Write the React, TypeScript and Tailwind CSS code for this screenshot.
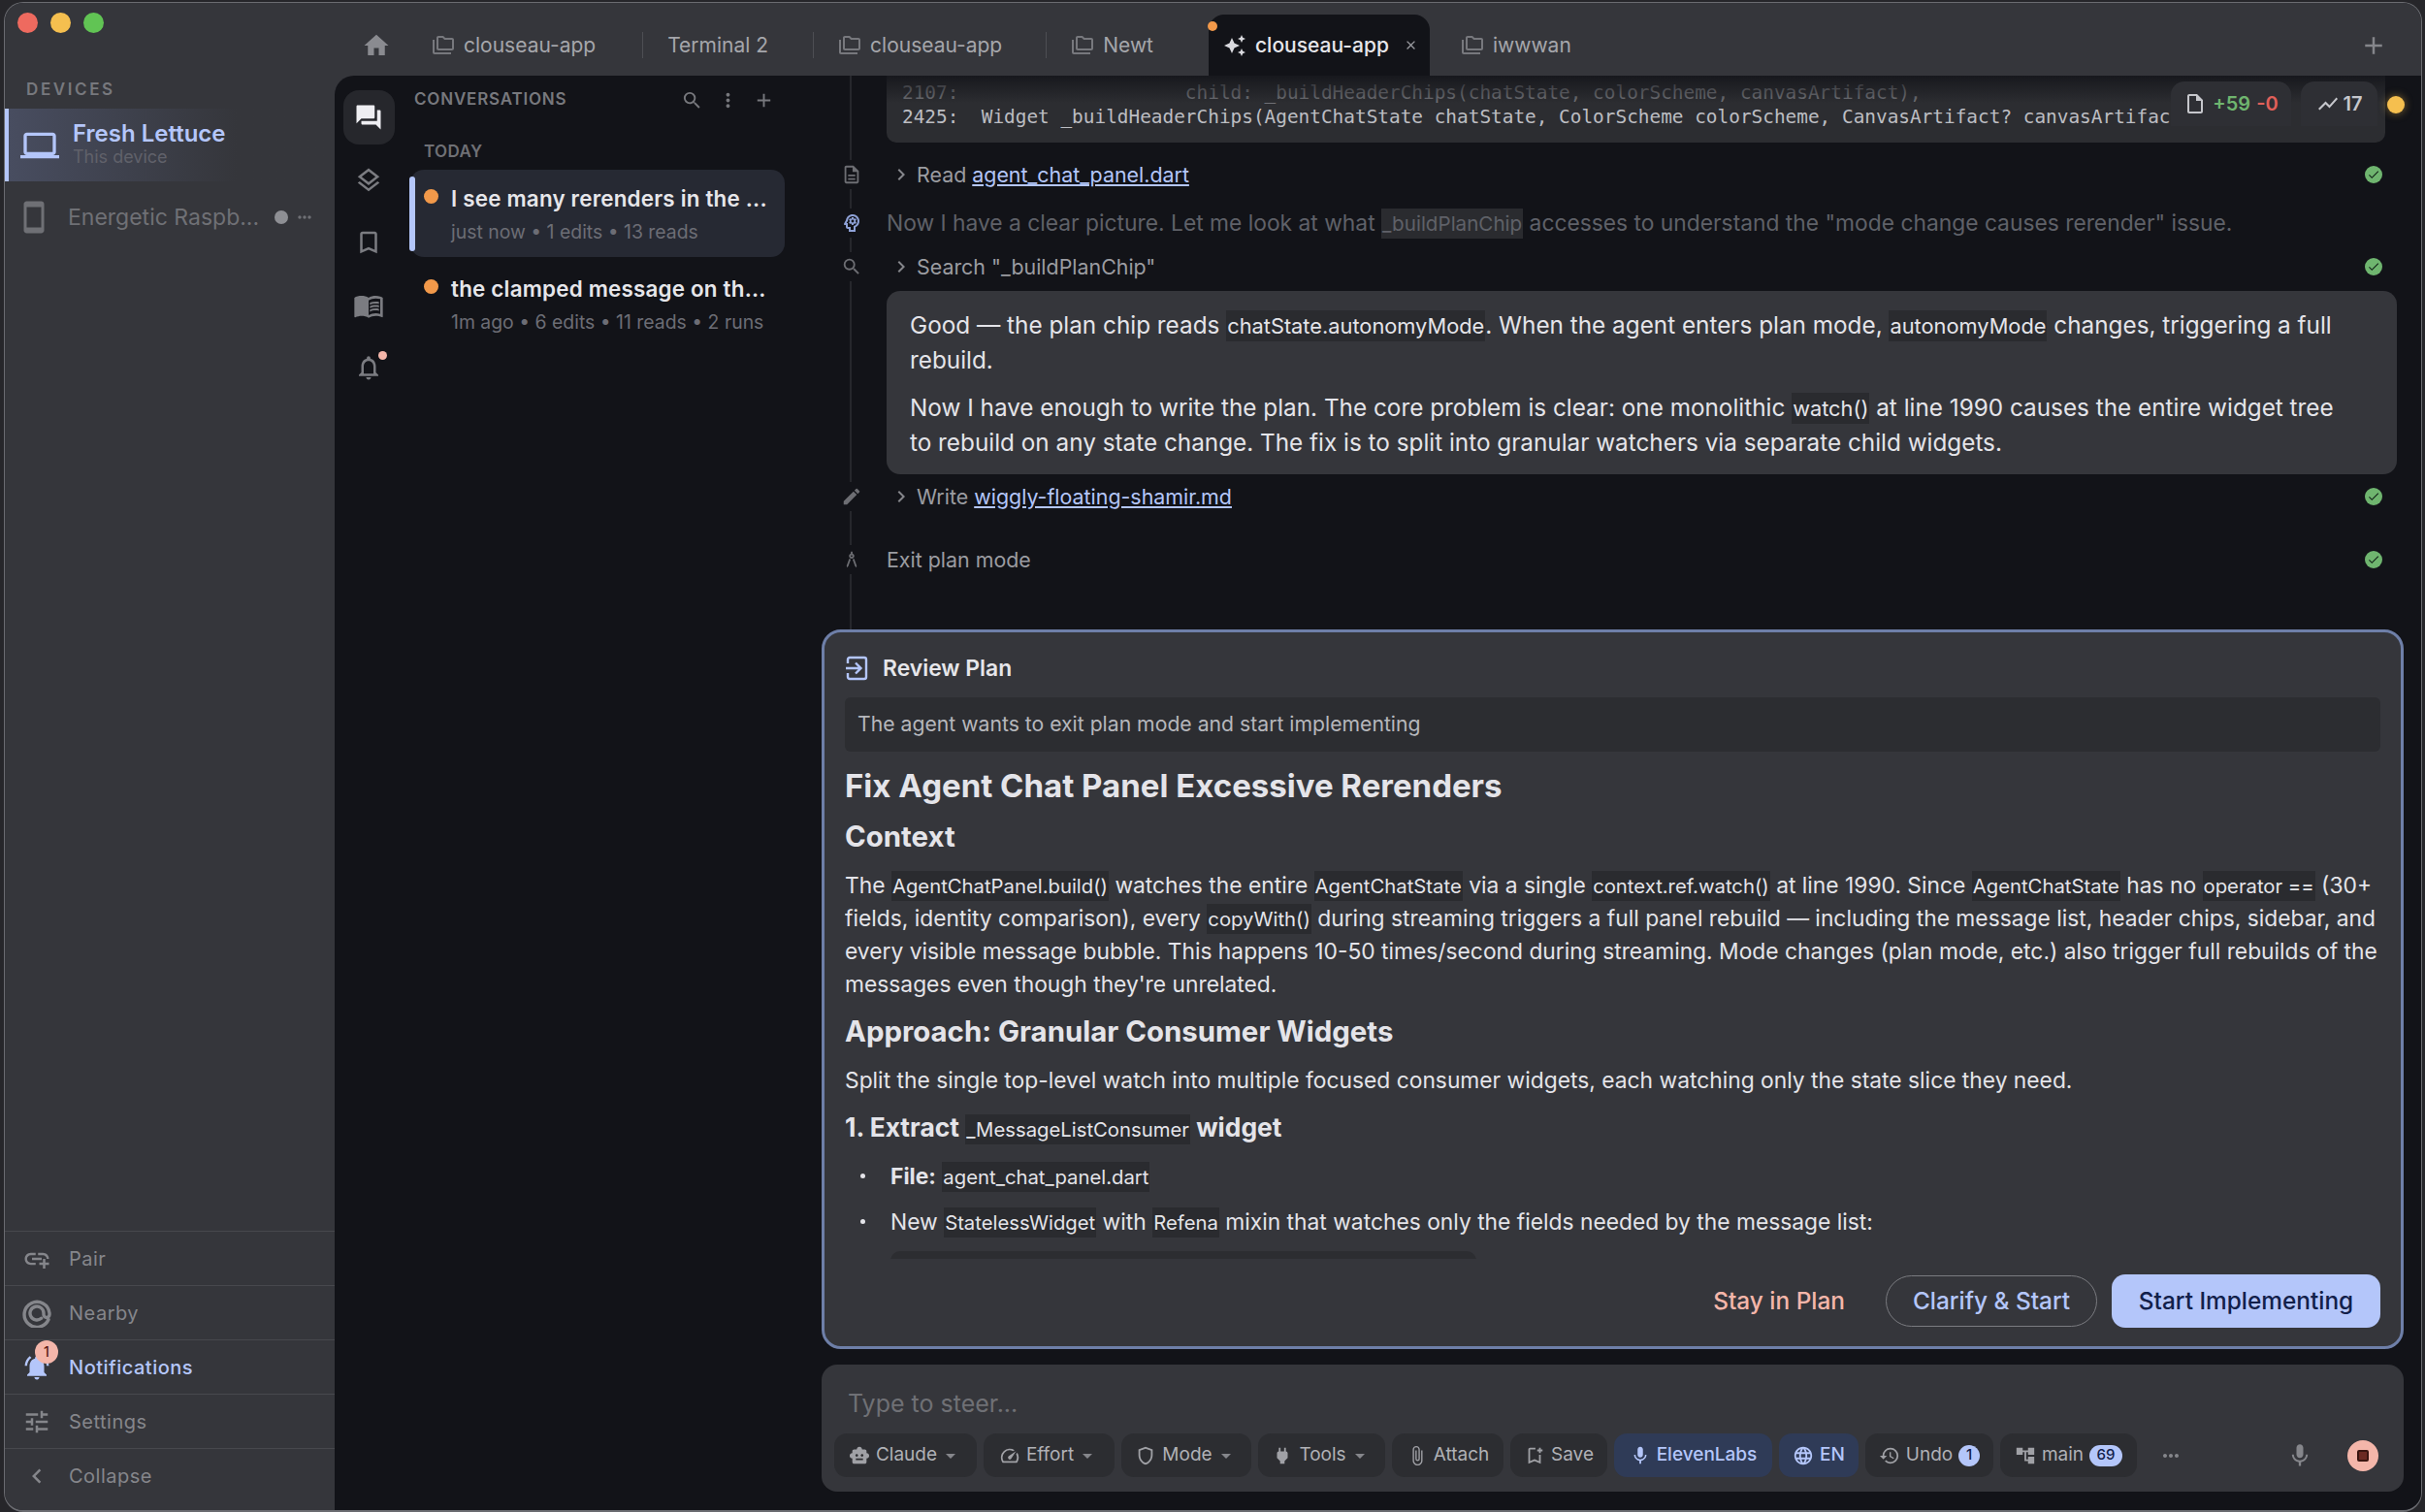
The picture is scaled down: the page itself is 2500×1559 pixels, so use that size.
import type { ReactNode } from "react";
import {
  MdAccountTree,
  MdAdd,
  MdArchitecture,
  MdArrowDropDown,
  MdAttachFile,
  MdAutoAwesome,
  MdCheck,
  MdChevronLeft,
  MdChevronRight,
  MdClose,
  MdEdit,
  MdForum,
  MdHistory,
  MdHome,
  MdLanguage,
  MdMenuBook,
  MdMic,
  MdMoreHoriz,
  MdMoreVert,
  MdNotificationsActive,
  MdOutlineAddLink,
  MdOutlineBookmarkAdd,
  MdOutlineBookmarkBorder,
  MdOutlineDescription,
  MdOutlineFolderCopy,
  MdOutlineInsertDriveFile,
  MdOutlineLaptop,
  MdOutlineLayers,
  MdOutlineNotifications,
  MdOutlinePsychology,
  MdOutlineShield,
  MdOutlineSmartphone,
  MdOutlineSpeed,
  MdPower,
  MdSearch,
  MdShowChart,
  MdSmartToy,
  MdTune,
} from "react-icons/md";
import type { IconType } from "react-icons";

const MONO = "font-['DejaVu_Sans_Mono',monospace]";

function NearbyIcon({ className }: { className?: string }) {
  return (
    <svg viewBox="0 0 30 30" fill="none" stroke="currentColor" strokeWidth="3.4" className={className}>
      <path d="M27 21.5A13 13 0 1 1 28 15v1.5a3 3 0 0 1-6 0V15a7 7 0 1 0-2.4 5.3" strokeLinecap="round" />
    </svg>
  );
}

function ReviewIcon({ className }: { className?: string }) {
  return (
    <svg viewBox="0 0 24 26" fill="none" stroke="currentColor" strokeWidth="2.4" className={className}>
      <path d="M3 8V4a2 2 0 0 1 2-2h15a2 2 0 0 1 2 2v18a2 2 0 0 1-2 2H5a2 2 0 0 1-2-2v-4" />
      <path d="M1 13h15M11 7.5l5.5 5.5-5.5 5.5" />
    </svg>
  );
}

function Code({ children, className = "text-[20.3px]" }: { children: ReactNode; className?: string }) {
  return <code className={`bg-[#2a2b2f] px-px py-[3px] font-['Inter',sans-serif] font-normal leading-none ${className}`}>{children}</code>;
}

function Tab({ label, sepGap }: { label: string; sepGap?: string }) {
  return (
    <div className="flex h-full items-center">
      <div className="flex items-center gap-[9px] text-[21px] text-[#a5a6ab]">
        <MdOutlineFolderCopy className="size-[24px] text-[#77787d]" />
        <span>{label}</span>
      </div>
      {sepGap && <div className={`mr-[25px] h-[27px] w-px bg-[#4d4e53] ${sepGap}`} />}
    </div>
  );
}

function TitleBar() {
  return (
    <div className="flex h-[75px] shrink-0 items-end bg-[#35363b] pl-[13px] pr-[34px]">
      <div className="flex h-[42px] gap-[13px] self-start pt-[10px]">
        <span className="size-[21px] rounded-full bg-[#ee6a5f]" />
        <span className="size-[21px] rounded-full bg-[#f5bf4f]" />
        <span className="size-[21px] rounded-full bg-[#61c454]" />
      </div>
      <div className="ml-[266px] flex h-[65px] flex-1 items-center pt-[2px]">
        <MdHome className="mr-[42px] size-[30px] text-[#8a8b90]" />
        <Tab label="clouseau-app" sepGap="ml-[48px]" />
        <div className="flex h-full items-center">
          <span className="text-[21px] text-[#a5a6ab]">Terminal 2</span>
          <div className="ml-[46px] mr-[25px] h-[27px] w-px bg-[#4d4e53]" />
        </div>
        <Tab label="clouseau-app" sepGap="ml-[45px]" />
        <Tab label="Newt" />
        <div className="relative ml-[57px] mr-[32px] flex h-full w-[228px] items-center gap-[9px] rounded-t-[16px] bg-[#121318] pl-[15px] text-[21px] font-medium text-[#e6e6ea]">
          <span className="absolute left-[-1px] top-[7px] size-[10px] rounded-full bg-[#f2994a]" />
          <MdAutoAwesome className="size-[24px] text-[#d9d9de]" />
          <span>clouseau-app</span>
          <MdClose className="ml-[6px] size-[15px] text-[#9a9ba0]" />
        </div>
        <Tab label="iwwwan" />
        <MdAdd className="ml-auto size-[30px] text-[#85868b]" />
      </div>
    </div>
  );
}

function SideAction({ icon: Icon, label, active }: { icon: IconType | typeof NearbyIcon; label: string; active?: boolean }) {
  return (
    <div className="flex h-[56px] items-center border-t-[1.5px] border-[#47484d] pl-[16px]">
      <div className="relative flex w-[34px] justify-center">
        <Icon className={`size-[30px] ${active ? "text-[#b4c6fa]" : "text-[#85868b]"}`} />
        {active && (
          <span className="absolute -top-[13px] left-[15px] flex size-[24px] items-center justify-center rounded-full bg-[#f4b6aa] text-[14px] font-medium text-[#5b1a12]">
            1
          </span>
        )}
      </div>
      <span className={`ml-[16px] text-[20px] tracking-[0.5px] ${active ? "font-medium text-[#b4c6fa]" : "text-[#85868b]"}`}>
        {label}
      </span>
    </div>
  );
}

function Sidebar() {
  return (
    <aside className="flex w-[340px] shrink-0 flex-col bg-[#35363b] pb-[8px]">
      <div className="pl-[22px] pt-[4px] text-[17px] font-semibold leading-[20px] tracking-[2.6px] text-[#77787d]">DEVICES</div>
      <div className="mt-[10px] flex h-[75px] items-center border-l-[4px] border-[#b4c6fa] bg-gradient-to-r from-[#484d60] to-[#35363b] to-70% pl-[12px]">
        <MdOutlineLaptop className="size-[40px] text-[#b4c6fa]" />
        <div className="-mt-[3px] ml-[14px]">
          <div className="text-[24px] font-semibold leading-[28px] text-[#b4c6fa]">Fresh Lettuce</div>
          <div className="text-[18px] leading-[20px] text-[#60616a]">This device</div>
        </div>
      </div>
      <div className="mt-[9px] flex h-[56px] items-center pl-[12px] text-[#6f7075]">
        <MdOutlineSmartphone className="size-[36px]" />
        <span className="ml-[17px] w-[197px] whitespace-nowrap text-[23px]">Energetic Raspb...</span>
        <span className="ml-[16px] size-[14px] rounded-full bg-[#8e8f94]" />
        <MdMoreHoriz className="ml-[7px] size-[20px]" />
      </div>
      <div className="mt-auto">
        <SideAction icon={MdOutlineAddLink} label="Pair" />
        <SideAction icon={NearbyIcon} label="Nearby" />
        <SideAction icon={MdNotificationsActive} label="Notifications" active />
        <SideAction icon={MdTune} label="Settings" />
        <SideAction icon={MdChevronLeft} label="Collapse" />
      </div>
    </aside>
  );
}

function Rail() {
  return (
    <div className="flex w-[70px] shrink-0 flex-col items-center pt-[15px] text-[#7b7c81]">
      <div className="flex h-[56px] w-[53px] items-center justify-center rounded-[16px] bg-[#26272c]">
        <MdForum className="size-[30px] text-[#eeeef2]" />
      </div>
      <MdOutlineLayers className="mt-[22px] size-[30px]" />
      <MdOutlineBookmarkBorder className="mt-[34px] size-[30px]" />
      <MdMenuBook className="mt-[34px] size-[32px]" />
      <div className="relative mt-[33px]">
        <MdOutlineNotifications className="size-[30px]" />
        <span className="absolute -top-[2px] right-[-4px] size-[9px] rounded-full bg-[#f4b6aa]" />
      </div>
    </div>
  );
}

function ConversationItem({ title, meta, selected }: { title: string; meta: string; selected?: boolean }) {
  return (
    <div className={`relative flex h-[90px] w-[386px] rounded-[14px] pl-[14px] pt-[19px] ${selected ? "bg-[#262933]" : ""}`}>
      {selected && <span className="absolute left-[-1px] top-[7px] h-[77px] w-[6px] rounded-full bg-[#b4c6fa]" />}
      <span className="mt-[1px] size-[15px] shrink-0 rounded-full bg-[#f2994a]" />
      <div className="ml-[13px] min-w-0 flex-1">
        <div className="whitespace-nowrap text-[22.4px] font-semibold leading-[22px] tracking-[0.2px] text-[#e6e6ea]">{title}</div>
        <div className="mt-[12px] whitespace-nowrap text-[19.4px] leading-[22px] text-[#6c6d75]">{meta}</div>
      </div>
    </div>
  );
}

function ConversationList() {
  return (
    <div className="w-[430px] shrink-0 pl-[8px] pt-[15px]">
      <div className="flex h-[20px] w-[384px] items-center pl-[4px] pr-[8px] text-[#77787d]">
        <span className="text-[17px] font-semibold tracking-[0.8px]">CONVERSATIONS</span>
        <MdSearch className="ml-auto size-[23px]" />
        <MdMoreVert className="ml-[14px] size-[23px]" />
        <MdAdd className="ml-[14px] size-[23px]" />
      </div>
      <div className="mt-[33px] pl-[14px] text-[17px] font-semibold leading-[20px] tracking-[0.4px] text-[#6f7075]">TODAY</div>
      <div className="mt-[9px] flex flex-col gap-[3px]">
        <ConversationItem selected title="I see many rerenders in the ..." meta="just now • 1 edits • 13 reads" />
        <ConversationItem title="the clamped message on th..." meta="1m ago • 6 edits • 11 reads • 2 runs" />
      </div>
    </div>
  );
}

function StatusCheck() {
  return (
    <span className="flex size-[18px] items-center justify-center rounded-full bg-[#6fb56f]">
      <MdCheck className="size-[14px] text-[#14261a]" />
    </span>
  );
}

function ToolRow({ icon: Icon, children, top }: { icon: IconType; children: ReactNode; top: number }) {
  return (
    <div className="relative flex items-center pl-[69px] pr-[40px] text-[21.4px] leading-[30px] text-[#9b9ca1]" style={{ marginTop: top }}>
      <span className="absolute left-[21px] flex h-[30px] w-[24px] items-center justify-center bg-[#121318]">
        <Icon className="size-[22px] text-[#6d6e73]" />
      </span>
      {children}
      <span className="ml-auto">
        <StatusCheck />
      </span>
    </div>
  );
}

function ChatLog() {
  return (
    <div className="relative h-[571px] shrink-0 overflow-hidden">
      <span className="absolute bottom-0 left-[31px] top-0 w-[2px] bg-[#26272c]" />
      <div className="relative ml-[69px] mr-[37px] h-[69px] overflow-hidden rounded-b-[10px] bg-[#2c2d31]">
        <pre className={`overflow-hidden pl-[16px] pt-[5px] text-[19.4px] leading-[25px] ${MONO}`}>
          <div className="text-[#6f7075]">{"2107:                    child: _buildHeaderChips(chatState, colorScheme, canvasArtifact),"}</div>
          <div className="text-[#bcbdc2]">{"2425:  Widget _buildHeaderChips(AgentChatState chatState, ColorScheme colorScheme, CanvasArtifact? canvasArtifact"}</div>
        </pre>
        <span className="absolute inset-x-0 top-0 h-[28px] bg-gradient-to-b from-[#121318]/80 to-transparent" />
      </div>

      <div className="absolute right-[45px] top-[6px] flex gap-[10px]">
        <div className="flex h-[46px] w-[124px] items-center justify-center gap-[6px] rounded-t-[14px] bg-[#2e2f34] text-[20px] font-semibold">
          <MdOutlineInsertDriveFile className="size-[24px] text-[#c6c7cc]" />
          <span className="text-[#6fb56f]">+59</span>
          <span className="text-[#e0605a]">-0</span>
        </div>
        <div className="flex h-[46px] w-[79px] items-center justify-center gap-[4px] rounded-t-[14px] bg-[#2e2f34] text-[20px] font-semibold text-[#c6c7cc]">
          <MdShowChart className="size-[24px]" />
          17
        </div>
      </div>
      <span className="absolute right-[17px] top-[21px] size-[18px] rounded-full bg-[#f5bf4f] shadow-[0_0_8px_#f5bf4f80]" />

      <ToolRow icon={MdOutlineDescription} top={18}>
        <MdChevronRight className="absolute left-[72px] size-[24px] text-[#85868b]" />
        <span className="pl-[31px]">
          Read <span className="text-[#b4c6fa] underline">agent_chat_panel.dart</span>
        </span>
      </ToolRow>

      <div className="relative mt-[20px] flex items-center pl-[69px] text-[22.8px] leading-[30px] text-[#5f6168]">
        <span className="absolute left-[21px] flex h-[30px] w-[24px] items-center justify-center bg-[#121318]">
          <MdOutlinePsychology className="size-[24px] text-[#8ea1d6]" />
        </span>
        <span className="whitespace-nowrap">
          Now I have a clear picture. Let me look at what <Code className="text-[20.6px]">_buildPlanChip</Code> accesses to understand the "mode change causes rerender" issue.
        </span>
      </div>

      <ToolRow icon={MdSearch} top={15}>
        <MdChevronRight className="absolute left-[72px] size-[24px] text-[#85868b]" />
        <span className="pl-[31px]">Search "_buildPlanChip"</span>
      </ToolRow>

      <div className="ml-[69px] mr-[25px] mt-[10px] h-[189px] rounded-[14px] bg-[#35363b] pl-[24px] pr-[44px] pt-[17px] text-[24.3px] leading-[36px] text-[#e4e4e9]">
        <p>
          Good — the plan chip reads <Code className="text-[21.8px]">chatState.autonomyMode</Code>. When the agent enters plan mode, <Code className="text-[21.8px]">autonomyMode</Code> changes, triggering a full rebuild.
        </p>
        <p className="mt-[13px]">
          Now I have enough to write the plan. The core problem is clear: one monolithic <Code className="text-[21.8px]">watch()</Code> at line 1990 causes the entire widget tree to rebuild on any state change. The fix is to split into granular watchers via separate child widgets.
        </p>
      </div>

      <ToolRow icon={MdEdit} top={8}>
        <MdChevronRight className="absolute left-[72px] size-[24px] text-[#85868b]" />
        <span className="pl-[31px]">
          Write <span className="text-[#b4c6fa] underline">wiggly-floating-shamir.md</span>
        </span>
      </ToolRow>

      <ToolRow icon={MdArchitecture} top={35}>
        <span>Exit plan mode</span>
      </ToolRow>
    </div>
  );
}

function PlanBody() {
  return (
    <div className="mt-[13px] h-[510px] overflow-hidden text-[22.8px] leading-[34px] text-[#e4e4e9]">
      <h1 className="text-[33px] font-bold leading-[44px]">Fix Agent Chat Panel Excessive Rerenders</h1>
      <h2 className="mt-[11px] text-[29.4px] font-bold leading-[40px]">Context</h2>
      <p className="mt-[13px]">
        The <Code>AgentChatPanel.build()</Code> watches the entire <Code>AgentChatState</Code> via a single <Code>context.ref.watch()</Code> at line 1990. Since <Code>AgentChatState</Code> has no <Code>operator ==</Code> (30+ fields, identity comparison), every <Code>copyWith()</Code> during streaming triggers a full panel rebuild — including the message list, header chips, sidebar, and every visible message bubble. This happens 10-50 times/second during streaming. Mode changes (plan mode, etc.) also trigger full rebuilds of the messages even though they're unrelated.
      </p>
      <h2 className="mt-[12px] text-[29.4px] font-bold leading-[40px]">Approach: Granular Consumer Widgets</h2>
      <p className="mt-[13px]">Split the single top-level watch into multiple focused consumer widgets, each watching only the state slice they need.</p>
      <h3 className="mt-[13px] text-[26.4px] font-bold leading-[36px]">
        1. Extract <Code>_MessageListConsumer</Code> widget
      </h3>
      <ul className="mt-[16px] space-y-[13px] pl-[47px]">
        <li className="relative">
          <span className="absolute -left-[31px] top-[14px] size-[5px] rounded-full bg-[#e4e4e9]" />
          <strong className="font-bold">File:</strong> <Code>agent_chat_panel.dart</Code>
        </li>
        <li className="relative">
          <span className="absolute -left-[31px] top-[14px] size-[5px] rounded-full bg-[#e4e4e9]" />
          New <Code>StatelessWidget</Code> with <Code>Refena</Code> mixin that watches only the fields needed by the message list:
        </li>
      </ul>
      <div className="ml-[47px] mt-[13px] h-[30px] w-[604px] rounded-t-[10px] bg-[#2c2d31]" />
    </div>
  );
}

function PlanCard() {
  return (
    <div className="ml-[2px] mr-[18px] h-[742px] shrink-0 rounded-[20px] border-[3px] border-[#6e7fa8] bg-[#35363b] px-[21px] pt-[23px]">
      <div className="flex h-[28px] items-center gap-[15px] text-[22.9px] font-semibold text-[#e6e6ea]">
        <ReviewIcon className="h-[26px] w-[24px] text-[#b4c6fa]" />
        Review Plan
      </div>
      <div className="mt-[16px] flex h-[56px] items-center rounded-[6px] bg-[#2c2d31] pl-[13px] text-[21.2px] text-[#b6b7bc]">
        The agent wants to exit plan mode and start implementing
      </div>
      <PlanBody />
      <div className="mt-[16px] flex items-center justify-end text-[24.4px] font-medium">
        <span className="mr-[42px] text-[#f4b6aa]">Stay in Plan</span>
        <span className="flex h-[53px] w-[218px] items-center justify-center rounded-full border-[1.5px] border-[#7a7b80] text-[#b4c6fa]">Clarify &amp; Start</span>
        <span className="ml-[15px] flex h-[55px] w-[277px] items-center justify-center rounded-[14px] bg-[#b4c6fa] text-[#12204a]">Start Implementing</span>
      </div>
    </div>
  );
}

function Chip({ icon: Icon, label, caret, accent, children, width }: { icon: IconType; label: string; caret?: boolean; accent?: boolean; children?: ReactNode; width: string }) {
  return (
    <div className={`flex h-[45px] shrink-0 items-center justify-center gap-[6px] rounded-[13px] text-[19px] ${accent ? "bg-[#2f3b57] font-medium text-[#b4c6fa]" : "bg-[#2c2d31] text-[#b0b1b6]"} ${width}`}>
      <Icon className={`size-[22px] ${accent ? "text-[#b4c6fa]" : "text-[#a0a1a6]"}`} />
      <span>{label}</span>
      {caret && <MdArrowDropDown className="-ml-[4px] size-[24px] text-[#85868b]" />}
      {children}
    </div>
  );
}

function Composer() {
  return (
    <div className="ml-[2px] mr-[18px] mt-[16px] h-[131px] shrink-0 rounded-[16px] bg-[#35363b] px-[13px] pt-[26px]">
      <div className="pl-[14px] text-[25px] leading-[28px] text-[#6f7075]">Type to steer...</div>
      <div className="mt-[17px] flex items-center gap-[7px]">
        <Chip icon={MdSmartToy} label="Claude" caret width="w-[147px]" />
        <Chip icon={MdOutlineSpeed} label="Effort" caret width="w-[135px]" />
        <Chip icon={MdOutlineShield} label="Mode" caret width="w-[134px]" />
        <Chip icon={MdPower} label="Tools" caret width="w-[131px]" />
        <Chip icon={MdAttachFile} label="Attach" width="w-[115px]" />
        <Chip icon={MdOutlineBookmarkAdd} label="Save" width="w-[100px]" />
        <Chip icon={MdMic} label="ElevenLabs" accent width="w-[163px]" />
        <Chip icon={MdLanguage} label="EN" accent width="w-[82px]" />
        <Chip icon={MdHistory} label="Undo" width="w-[132px]">
          <span className="flex size-[22px] items-center justify-center rounded-full bg-[#b4c6fa] text-[15px] font-medium text-[#12204a]">1</span>
        </Chip>
        <Chip icon={MdAccountTree} label="main" width="w-[141px]">
          <span className="flex h-[22px] w-[34px] items-center justify-center rounded-full bg-[#b4c6fa] text-[15px] font-medium text-[#12204a]">69</span>
        </Chip>
        <MdMoreHoriz className="ml-[16px] size-[24px] text-[#85868b]" />
        <MdMic className="ml-auto size-[28px] text-[#85868b]" />
        <span className="ml-[28px] mr-[13px] flex size-[32px] items-center justify-center rounded-full bg-[#f4b6aa]">
          <span className="size-[12px] rounded-[2px] border-[2px] border-[#3a1510] bg-[#6b2a22]" />
        </span>
      </div>
    </div>
  );
}

export default function App() {
  return (
    <div className="h-[1559px] w-[2500px] overflow-hidden bg-[#26262a] pl-[4px] pr-[3px] pt-[2px] font-['Inter',sans-serif]">
      <div className="flex h-full flex-col overflow-hidden rounded-[20px] border border-b-[2px] border-[#6a6b70] bg-[#35363b]">
        <TitleBar />
        <div className="flex min-h-0 flex-1">
          <Sidebar />
          <main className="flex min-w-0 flex-1 overflow-hidden rounded-tl-[20px] bg-[#121318]">
            <Rail />
            <ConversationList />
            <div className="flex min-w-0 flex-1 flex-col">
              <ChatLog />
              <PlanCard />
              <Composer />
            </div>
          </main>
        </div>
      </div>
    </div>
  );
}
